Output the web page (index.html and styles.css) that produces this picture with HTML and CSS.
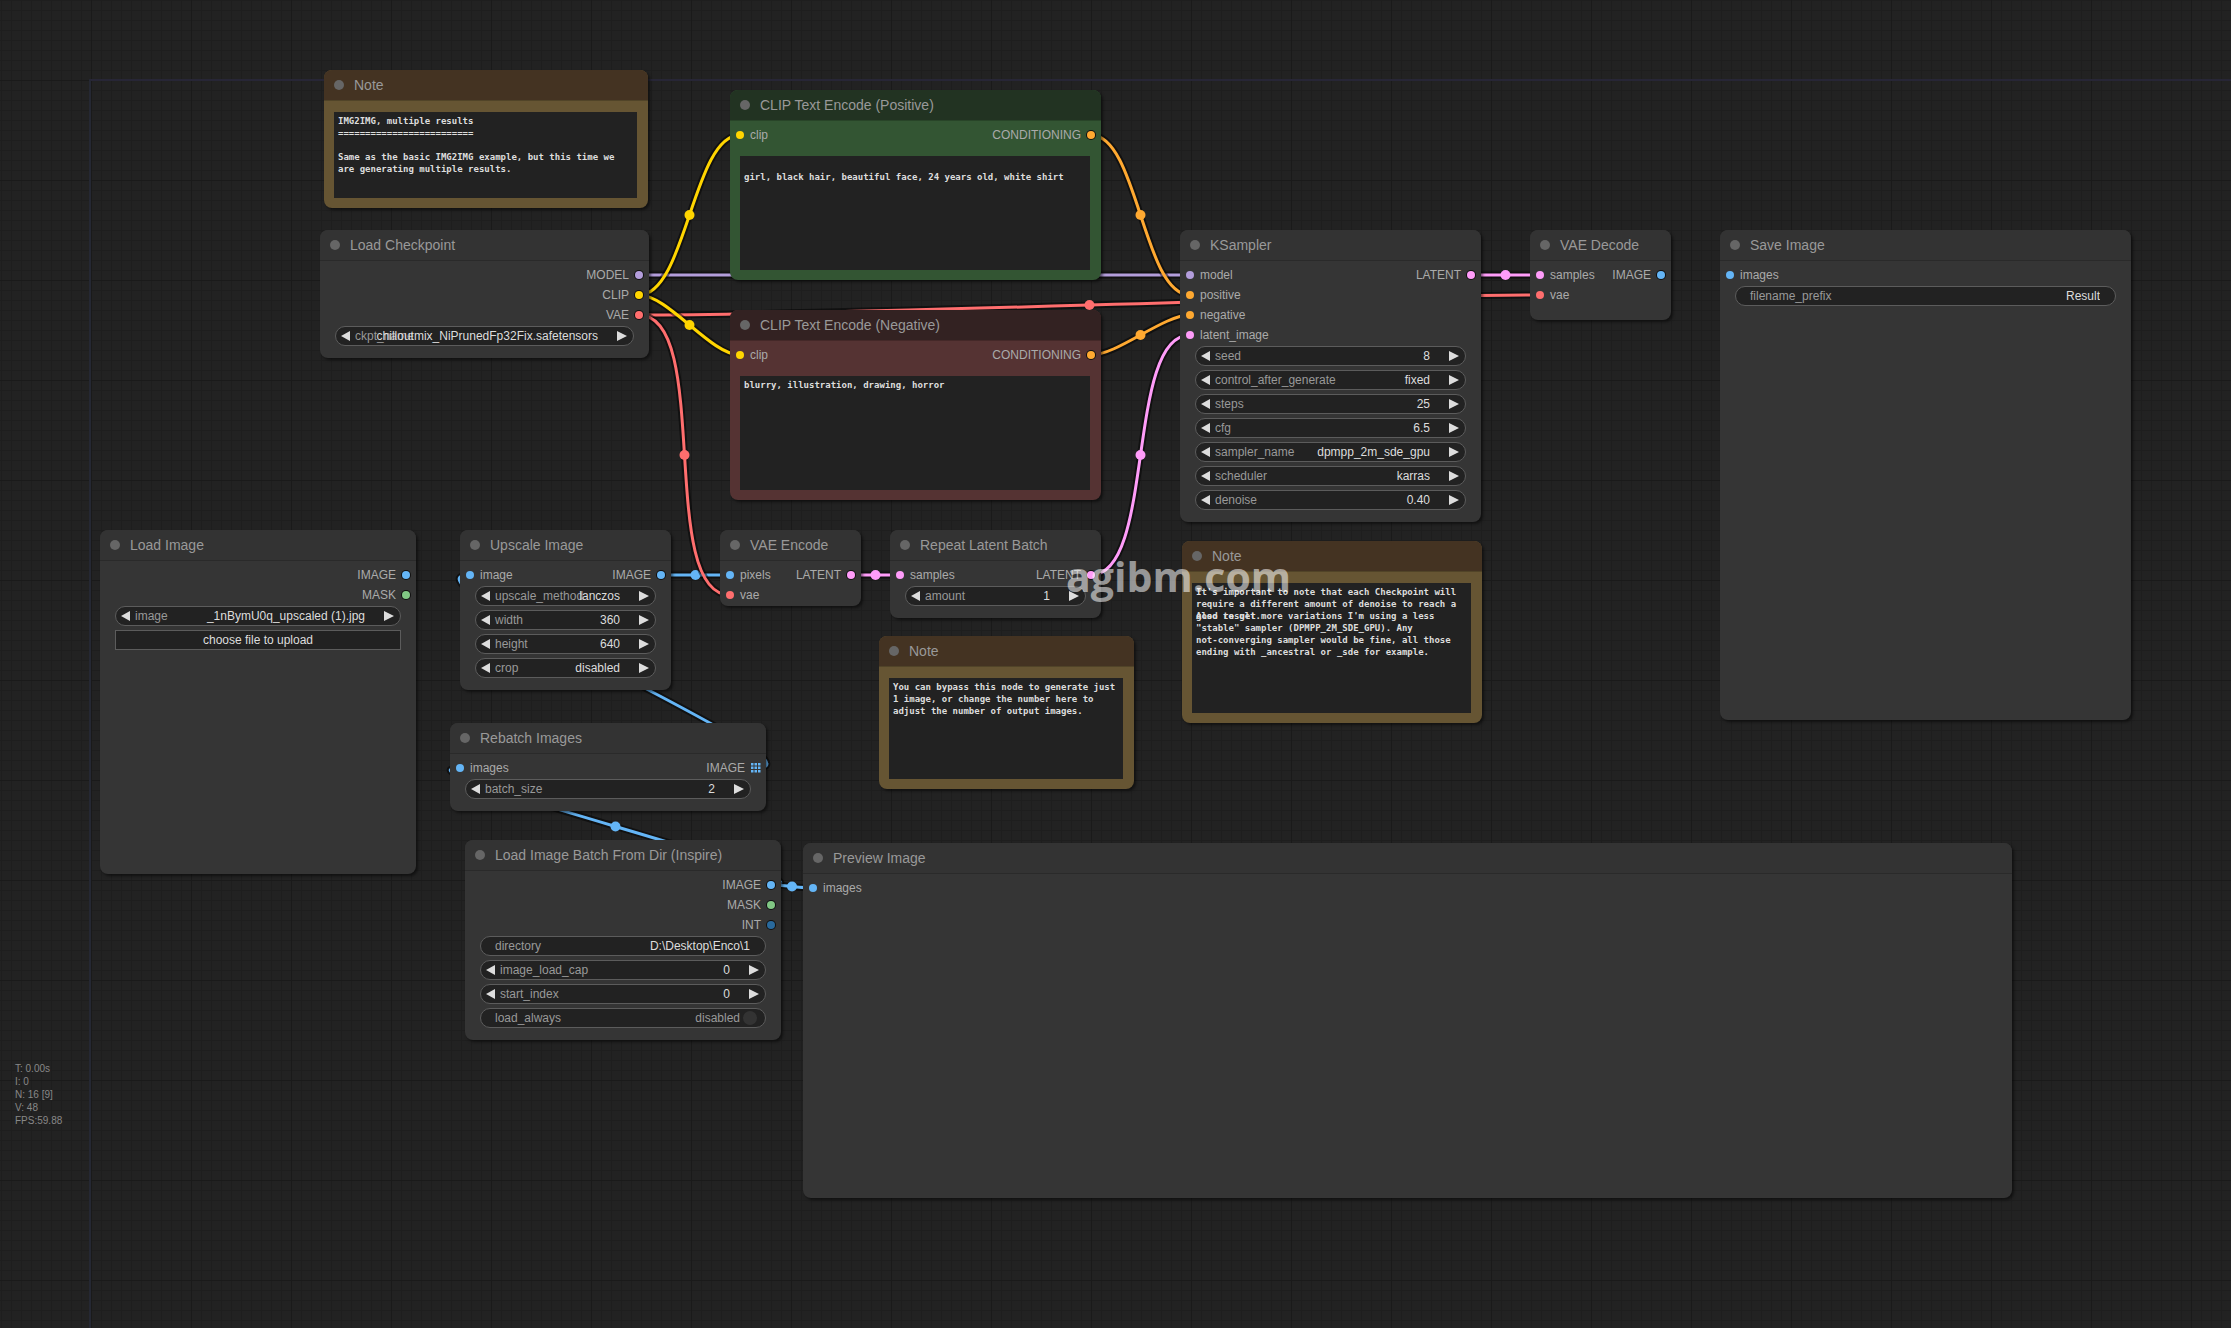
FILE: index.html
```html
<!DOCTYPE html>
<html lang="en">
<head>
  <meta charset="UTF-8" />
  <meta name="viewport" content="width=device-width, initial-scale=1.0" />
  <title>ComfyUI</title>
  <link rel="stylesheet" href="styles.css">
</head>
<body>
  <main class="canvas" id="canvas">
    <svg class="links" id="links" aria-hidden="true"></svg>

    <!-- Notes -->
    <section class="node note note-intro">
      <h2 class="title">Note</h2>
      <textarea class="text" aria-label="Note" spellcheck="false">IMG2IMG, multiple results
=========================

Same as the basic IMG2IMG example, but this time we
are generating multiple results.</textarea>
    </section>

    <section class="node note note-batch">
      <h2 class="title">Note</h2>
      <textarea class="text" aria-label="Note" spellcheck="false">You can bypass this node to generate just
1 image, or change the number here to
adjust the number of output images.</textarea>
    </section>

    <section class="node note note-denoise">
      <h2 class="title">Note</h2>
      <div class="text-stack">
        <textarea class="text" aria-label="Note, first layer" spellcheck="false">It's important to note that each Checkpoint will
require a different amount of denoise to reach a
good result.</textarea>
        <textarea class="text text-over" aria-label="Note, second layer" spellcheck="false">


Also to get more variations I'm using a less
"stable" sampler (DPMPP_2M_SDE_GPU). Any
not-converging sampler would be fine, all those
ending with _ancestral or _sde for example.</textarea>
      </div>
    </section>

    <!-- Loaders -->
    <section class="node load-checkpoint">
      <h2 class="title">Load Checkpoint</h2>
      <div class="slots">
        <ul class="outputs">
          <li>MODEL<i class="dot model" id="ckpt-model"></i></li>
          <li>CLIP<i class="dot clip" id="ckpt-clip"></i></li>
          <li>VAE<i class="dot vae" id="ckpt-vae"></i></li>
        </ul>
      </div>
      <div class="widgets">
        <div class="widget">
          <button class="arrow prev" aria-label="Previous"></button>
          <label for="ckpt_name">ckpt_name</label>
          <select id="ckpt_name"><option>chilloutmix_NiPrunedFp32Fix.safetensors</option></select>
          <button class="arrow next" aria-label="Next"></button>
        </div>
      </div>
    </section>

    <section class="node load-image">
      <h2 class="title">Load Image</h2>
      <div class="slots">
        <ul class="outputs">
          <li>IMAGE<i class="dot image"></i></li>
          <li>MASK<i class="dot mask"></i></li>
        </ul>
      </div>
      <div class="widgets">
        <div class="widget">
          <button class="arrow prev" aria-label="Previous"></button>
          <label for="image">image</label>
          <select id="image"><option>_1nBymU0q_upscaled (1).jpg</option></select>
          <button class="arrow next" aria-label="Next"></button>
        </div>
        <button class="upload">choose file to upload</button>
      </div>
    </section>

    <section class="node load-batch">
      <h2 class="title">Load Image Batch From Dir (Inspire)</h2>
      <div class="slots">
        <ul class="outputs">
          <li>IMAGE<i class="dot image" id="dir-image"></i></li>
          <li>MASK<i class="dot mask"></i></li>
          <li>INT<i class="dot int"></i></li>
        </ul>
      </div>
      <div class="widgets">
        <div class="widget plain">
          <label for="directory">directory</label>
          <input id="directory" type="text" value="D:\Desktop\Enco\1" />
        </div>
        <div class="widget">
          <button class="arrow prev" aria-label="Decrease"></button>
          <label for="image_load_cap">image_load_cap</label>
          <input id="image_load_cap" type="text" value="0" />
          <button class="arrow next" aria-label="Increase"></button>
        </div>
        <div class="widget">
          <button class="arrow prev" aria-label="Decrease"></button>
          <label for="start_index">start_index</label>
          <input id="start_index" type="text" value="0" />
          <button class="arrow next" aria-label="Increase"></button>
        </div>
        <div class="widget toggle">
          <label for="load_always">load_always</label>
          <span class="state">disabled</span>
          <input id="load_always" type="checkbox" />
        </div>
      </div>
    </section>

    <!-- Prompts -->
    <section class="node positive">
      <h2 class="title">CLIP Text Encode (Positive)</h2>
      <div class="slots">
        <ul class="inputs"><li><i class="dot clip" id="pos-clip"></i>clip</li></ul>
        <ul class="outputs"><li>CONDITIONING<i class="dot cond" id="pos-cond"></i></li></ul>
      </div>
      <textarea class="text" aria-label="Positive prompt" spellcheck="false">

girl, black hair, beautiful face, 24 years old, white shirt</textarea>
    </section>

    <section class="node negative">
      <h2 class="title">CLIP Text Encode (Negative)</h2>
      <div class="slots">
        <ul class="inputs"><li><i class="dot clip" id="neg-clip"></i>clip</li></ul>
        <ul class="outputs"><li>CONDITIONING<i class="dot cond" id="neg-cond"></i></li></ul>
      </div>
      <textarea class="text" aria-label="Negative prompt" spellcheck="false">blurry, illustration, drawing, horror</textarea>
    </section>

    <!-- Images -->
    <section class="node upscale">
      <h2 class="title">Upscale Image</h2>
      <div class="slots">
        <ul class="inputs"><li><i class="dot image" id="up-in"></i>image</li></ul>
        <ul class="outputs"><li>IMAGE<i class="dot image" id="up-out"></i></li></ul>
      </div>
      <div class="widgets">
        <div class="widget">
          <button class="arrow prev" aria-label="Previous"></button>
          <label for="upscale_method">upscale_method</label>
          <select id="upscale_method"><option>lanczos</option></select>
          <button class="arrow next" aria-label="Next"></button>
        </div>
        <div class="widget">
          <button class="arrow prev" aria-label="Decrease"></button>
          <label for="width">width</label>
          <input id="width" type="text" value="360" />
          <button class="arrow next" aria-label="Increase"></button>
        </div>
        <div class="widget">
          <button class="arrow prev" aria-label="Decrease"></button>
          <label for="height">height</label>
          <input id="height" type="text" value="640" />
          <button class="arrow next" aria-label="Increase"></button>
        </div>
        <div class="widget">
          <button class="arrow prev" aria-label="Previous"></button>
          <label for="crop">crop</label>
          <select id="crop"><option>disabled</option></select>
          <button class="arrow next" aria-label="Next"></button>
        </div>
      </div>
    </section>

    <section class="node rebatch">
      <h2 class="title">Rebatch Images</h2>
      <div class="slots">
        <ul class="inputs"><li><i class="dot image" id="re-in"></i>images</li></ul>
        <ul class="outputs">
          <li>IMAGE<svg class="grid-slot" id="re-out" viewBox="0 0 10 10"><path d="M0 0h2.5v2.5H0zM3.5 0H6v2.5H3.5zM7 0h2.5v2.5H7zM0 3.5h2.5V6H0zM3.5 3.5H6V6H3.5zM7 3.5h2.5V6H7zM0 7h2.5v2.5H0zM3.5 7H6v2.5H3.5zM7 7h2.5v2.5H7z"/></svg></li>
        </ul>
      </div>
      <div class="widgets">
        <div class="widget">
          <button class="arrow prev" aria-label="Decrease"></button>
          <label for="batch_size">batch_size</label>
          <input id="batch_size" type="text" value="2" />
          <button class="arrow next" aria-label="Increase"></button>
        </div>
      </div>
    </section>

    <section class="node preview">
      <h2 class="title">Preview Image</h2>
      <div class="slots">
        <ul class="inputs"><li><i class="dot image" id="preview-in"></i>images</li></ul>
      </div>
    </section>

    <section class="node save-image">
      <h2 class="title">Save Image</h2>
      <div class="slots">
        <ul class="inputs"><li><i class="dot image"></i>images</li></ul>
      </div>
      <div class="widgets">
        <div class="widget plain">
          <label for="filename_prefix">filename_prefix</label>
          <input id="filename_prefix" type="text" value="Result" />
        </div>
      </div>
    </section>

    <!-- Latents -->
    <section class="node vae-encode">
      <h2 class="title">VAE Encode</h2>
      <div class="slots">
        <ul class="inputs">
          <li><i class="dot image" id="enc-pixels"></i>pixels</li>
          <li><i class="dot vae" id="enc-vae"></i>vae</li>
        </ul>
        <ul class="outputs"><li>LATENT<i class="dot latent" id="enc-latent"></i></li></ul>
      </div>
    </section>

    <section class="node repeat-latent">
      <h2 class="title">Repeat Latent Batch</h2>
      <div class="slots">
        <ul class="inputs"><li><i class="dot latent" id="rep-in"></i>samples</li></ul>
        <ul class="outputs"><li>LATENT<i class="dot latent" id="rep-out"></i></li></ul>
      </div>
      <div class="widgets">
        <div class="widget">
          <button class="arrow prev" aria-label="Decrease"></button>
          <label for="amount">amount</label>
          <input id="amount" type="text" value="1" />
          <button class="arrow next" aria-label="Increase"></button>
        </div>
      </div>
    </section>

    <section class="node ksampler">
      <h2 class="title">KSampler</h2>
      <div class="slots">
        <ul class="inputs">
          <li><i class="dot model" id="ks-model"></i>model</li>
          <li><i class="dot cond" id="ks-pos"></i>positive</li>
          <li><i class="dot cond" id="ks-neg"></i>negative</li>
          <li><i class="dot latent" id="ks-latent"></i>latent_image</li>
        </ul>
        <ul class="outputs"><li>LATENT<i class="dot latent" id="ks-out"></i></li></ul>
      </div>
      <div class="widgets">
        <div class="widget">
          <button class="arrow prev" aria-label="Decrease"></button>
          <label for="seed">seed</label>
          <input id="seed" type="text" value="8" />
          <button class="arrow next" aria-label="Increase"></button>
        </div>
        <div class="widget">
          <button class="arrow prev" aria-label="Previous"></button>
          <label for="control">control_after_generate</label>
          <select id="control"><option>fixed</option></select>
          <button class="arrow next" aria-label="Next"></button>
        </div>
        <div class="widget">
          <button class="arrow prev" aria-label="Decrease"></button>
          <label for="steps">steps</label>
          <input id="steps" type="text" value="25" />
          <button class="arrow next" aria-label="Increase"></button>
        </div>
        <div class="widget">
          <button class="arrow prev" aria-label="Decrease"></button>
          <label for="cfg">cfg</label>
          <input id="cfg" type="text" value="6.5" />
          <button class="arrow next" aria-label="Increase"></button>
        </div>
        <div class="widget">
          <button class="arrow prev" aria-label="Previous"></button>
          <label for="sampler_name">sampler_name</label>
          <select id="sampler_name"><option>dpmpp_2m_sde_gpu</option></select>
          <button class="arrow next" aria-label="Next"></button>
        </div>
        <div class="widget">
          <button class="arrow prev" aria-label="Previous"></button>
          <label for="scheduler">scheduler</label>
          <select id="scheduler"><option>karras</option></select>
          <button class="arrow next" aria-label="Next"></button>
        </div>
        <div class="widget">
          <button class="arrow prev" aria-label="Decrease"></button>
          <label for="denoise">denoise</label>
          <input id="denoise" type="text" value="0.40" />
          <button class="arrow next" aria-label="Increase"></button>
        </div>
      </div>
    </section>

    <section class="node vae-decode">
      <h2 class="title">VAE Decode</h2>
      <div class="slots">
        <ul class="inputs">
          <li><i class="dot latent" id="dec-samples"></i>samples</li>
          <li><i class="dot vae" id="dec-vae"></i>vae</li>
        </ul>
        <ul class="outputs"><li>IMAGE<i class="dot image"></i></li></ul>
      </div>
    </section>

    <div class="stats">
      <div>T: 0.00s</div>
      <div>I: 0</div>
      <div>N: 16 [9]</div>
      <div>V: 48</div>
      <div>FPS:59.88</div>
    </div>

    <div class="watermark">agibm.com</div>
  </main>

  <script src="app.js"></script>
</body>
</html>
```

FILE: styles.css
```css
* {
  box-sizing: border-box;
}

body {
  margin: 0;
  background: #222;
  font-family: Arial, "Liberation Sans", sans-serif;
}

/* Canvas and grid */
.canvas {
  position: relative;
  min-height: 100vh;
  overflow: hidden;
  background-color: #222;
  background-image:
    linear-gradient(#1a1a1a 1px, transparent 1px),
    linear-gradient(to right, #1a1a1a 1px, transparent 1px),
    linear-gradient(#1e1e1e 1px, transparent 1px),
    linear-gradient(to right, #1e1e1e 1px, transparent 1px);
  background-size: 100px 100px, 100px 100px, 10px 10px, 10px 10px;
  background-position: 91px 80px;
}

/* origin axes */
.canvas::before {
  content: "";
  position: absolute;
  top: 79px;
  right: 0;
  bottom: 0;
  left: 89px;
  border-top: 2px solid #272636;
  border-left: 2px solid #252833;
}

/* Links */
.links {
  position: absolute;
  top: 0;
  left: 0;
  width: 100%;
  height: 100%;
}

.links path {
  fill: none;
}

.link-shade {
  stroke: rgba(0, 0, 0, 0.5);
  stroke-width: 7px;
}

.link-line {
  stroke: currentColor;
  stroke-width: 3px;
}

.links circle {
  fill: currentColor;
}

.model { color: #b39ddb; }
.clip { color: #ffd500; }
.vae { color: #ff6e6e; }
.cond { color: #ffa931; }
.latent { color: #ff9cf9; }
.image { color: #64b5f6; }
.mask { color: #81c784; }
.int { color: #29699c; }

/* Node */
.node {
  position: absolute;
  display: flex;
  flex-direction: column;
  background: #353535;
  border-radius: 8px;
  box-shadow: 2px 2px 3px rgba(0, 0, 0, 0.5);
}

.title {
  display: flex;
  align-items: center;
  gap: 10px;
  height: 30px;
  margin: 0;
  padding-left: 10px;
  background: #333;
  border-radius: 8px 8px 0 0;
  box-shadow: 0 1px 0 rgba(0, 0, 0, 0.2);
  color: #999;
  font-size: 14px;
  font-weight: normal;
  white-space: nowrap;
}

.title::before {
  content: "";
  width: 10px;
  height: 10px;
  border-radius: 50%;
  background: #666;
}

.slots {
  display: flex;
  justify-content: space-between;
  padding-top: 5px;
  color: #aaa;
  font-size: 12px;
  line-height: 20px;
}

.slots ul {
  margin: 0;
  padding: 0 6px;
  list-style: none;
}

.slots .outputs {
  margin-left: auto;
}

.slots li {
  display: flex;
  align-items: center;
  gap: 6px;
  height: 20px;
}

.outputs li {
  justify-content: flex-end;
}

.dot {
  width: 8px;
  height: 8px;
  border-radius: 50%;
  background: currentColor;
}

.outputs .dot {
  box-shadow: 0 0 0 1px #111;
}

.grid-slot {
  width: 10px;
  height: 10px;
  margin-right: -1px;
  fill: #64b5f6;
}

/* Widgets */
.widgets {
  display: flex;
  flex-direction: column;
  gap: 4px;
  padding: 1px 15px 12px;
}

.widget {
  display: grid;
  grid-template-columns: 19px 1fr 35px;
  height: 20px;
  background: #222;
  border: 1px solid #5c5c5c;
  border-radius: 10px;
  font-size: 12px;
  line-height: 18px;
}

.widget label,
.widget input,
.widget select {
  grid-area: 1 / 2;
  min-width: 0;
}

.widget label {
  color: #999;
  white-space: nowrap;
}

.widget input,
.widget select {
  appearance: none;
  width: 100%;
  height: 18px;
  margin: 0;
  padding: 0;
  background: none;
  border: none;
  outline: none;
  color: #ddd;
  font: inherit;
  text-align: right;
  text-align-last: right;
}

.plain {
  grid-template-columns: 14px 1fr 15px;
}

.arrow {
  display: flex;
  align-items: center;
  grid-row: 1;
  padding: 0 5px;
  background: none;
  border: none;
  cursor: pointer;
}

.arrow::before {
  content: "";
  width: 10px;
  height: 10px;
  background: #ddd;
  clip-path: polygon(0 50%, 100% 0, 100% 100%);
}

.next {
  grid-column: 3;
  justify-content: flex-end;
  padding-right: 6px;
}

.next::before {
  clip-path: polygon(0 0, 100% 50%, 0 100%);
}

.toggle {
  grid-template-columns: 14px 1fr auto 22px;
}

.toggle .state {
  grid-area: 1 / 3;
  padding-right: 3px;
  color: #999;
}

.widget.toggle input {
  grid-area: 1 / 4;
  align-self: center;
  width: 14px;
  height: 14px;
  border-radius: 50%;
  background: #333;
}

.upload {
  height: 20px;
  padding: 0;
  background: #222;
  border: 1px solid #5c5c5c;
  color: #ddd;
  font: 12px Arial, "Liberation Sans", sans-serif;
}

/* Text boxes */
.text {
  flex: 1;
  margin: 12px 11px 10px 10px;
  padding: 3px 4px;
  background: #222;
  border: none;
  outline: none;
  resize: none;
  overflow: hidden;
  color: #ddd;
  font: bold 9px/12px Consolas, "DejaVu Sans Mono", monospace;
}

.slots + .text {
  margin-top: 11px;
}

.text-stack {
  display: grid;
  flex: 1;
}

.text-stack .text {
  grid-area: 1 / 1;
}

.text-stack .text-over {
  background: none;
}

/* Node colors */
.note { background: #653; }
.note .title { background: #432; }
.positive { background: #353; }
.positive .title { background: #232; }
.negative { background: #533; }
.negative .title { background: #322; }

/* Places on the canvas */
.note-intro { left: 324px; top: 70px; width: 324px; height: 138px; }
.note-batch { left: 879px; top: 636px; width: 255px; height: 153px; }
.note-denoise { left: 1182px; top: 541px; width: 300px; height: 182px; }
.load-checkpoint { left: 320px; top: 230px; width: 329px; }
.load-image { left: 100px; top: 530px; width: 316px; height: 344px; }
.load-batch { left: 465px; top: 840px; width: 316px; }
.positive { left: 730px; top: 90px; width: 371px; height: 190px; }
.negative { left: 730px; top: 310px; width: 371px; height: 190px; }
.upscale { left: 460px; top: 530px; width: 211px; }
.rebatch { left: 450px; top: 723px; width: 316px; }
.preview { left: 803px; top: 843px; width: 1209px; height: 355px; }
.save-image { left: 1720px; top: 230px; width: 411px; height: 490px; }
.vae-encode { left: 720px; top: 530px; width: 141px; height: 76px; }
.repeat-latent { left: 890px; top: 530px; width: 211px; }
.ksampler { left: 1180px; top: 230px; width: 301px; }
.vae-decode { left: 1530px; top: 230px; width: 141px; height: 90px; }

/* Overlays */
.stats {
  position: absolute;
  left: 15px;
  top: 1062px;
  color: #888;
  font-size: 10px;
  line-height: 13px;
}

.watermark {
  position: absolute;
  left: 1066px;
  top: 546px;
  color: rgba(255, 255, 255, 0.55);
  font: bold 41px/60px "Open Sans", sans-serif;
  pointer-events: none;
}
```

FILE: app.js
```js
// [output slot, input slot, type]
const links = [
  ["ckpt-model", "ks-model", "model"],
  ["ckpt-vae", "dec-vae", "vae"],
  ["ckpt-clip", "pos-clip", "clip"],
  ["ckpt-clip", "neg-clip", "clip"],
  ["up-out", "enc-pixels", "image"],
  ["ckpt-vae", "enc-vae", "vae"],
  ["pos-cond", "ks-pos", "cond"],
  ["neg-cond", "ks-neg", "cond"],
  ["enc-latent", "rep-in", "latent"],
  ["rep-out", "ks-latent", "latent"],
  ["ks-out", "dec-samples", "latent"],
  ["re-out", "up-in", "image"],
  ["dir-image", "re-in", "image"],
  ["dir-image", "preview-in", "image"],
];

const svg = document.getElementById("links");

function center(id) {
  const box = document.getElementById(id).getBoundingClientRect();
  const base = svg.getBoundingClientRect();
  return [box.left + box.width / 2 - base.left, box.top + box.height / 2 - base.top];
}

function drawLinks() {
  let out = "";
  for (const [from, to, type] of links) {
    const [x1, y1] = center(from);
    const [x2, y2] = center(to);
    const bend = Math.hypot(x2 - x1, y2 - y1) * 0.25;
    const d = `M${x1} ${y1}C${x1 + bend} ${y1} ${x2 - bend} ${y2} ${x2} ${y2}`;
    out += `<g class="${type}">
      <path class="link-shade" d="${d}"/>
      <path class="link-line" d="${d}"/>
      <circle cx="${(x1 + x2) / 2}" cy="${(y1 + y2) / 2}" r="5"/>
    </g>`;
  }
  svg.innerHTML = out;
}

drawLinks();
window.addEventListener("resize", drawLinks);
```
